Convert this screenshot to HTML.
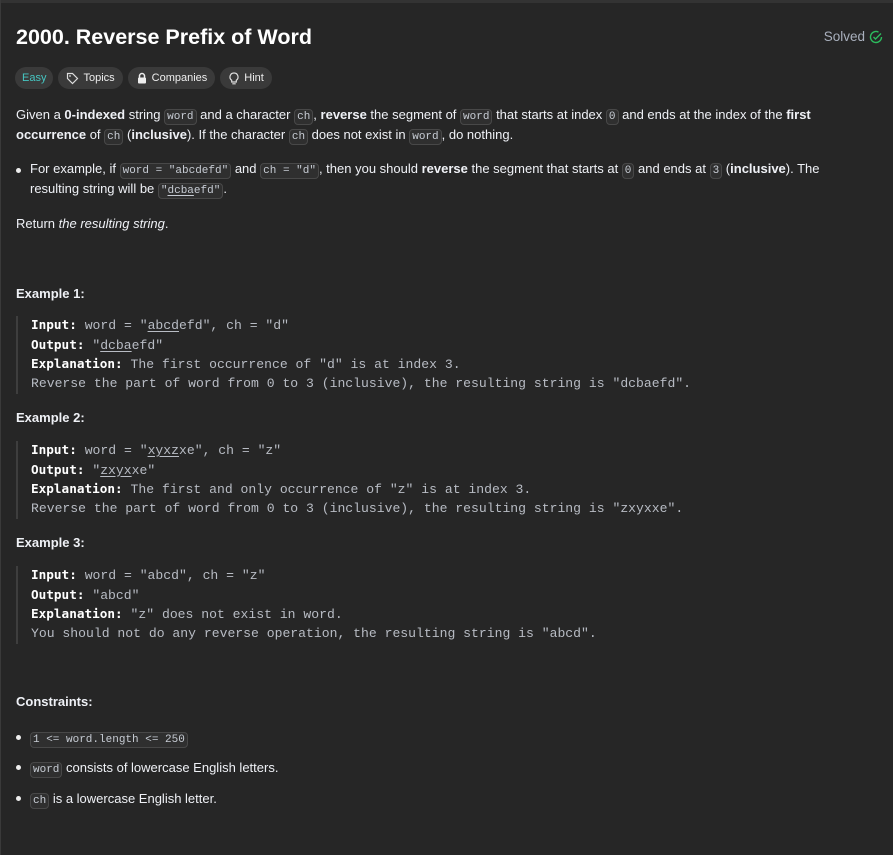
<!DOCTYPE html>
<html><head><meta charset="utf-8"><style>
body{margin:0;width:893px;height:855px;background:#262626;overflow:hidden;font-family:"Liberation Sans",sans-serif;color:#eff1f6;font-size:13px;position:relative}
.top{position:absolute;left:0;top:0;width:893px;height:3px;background:#333}
.lb{position:absolute;left:0;top:0;width:1px;height:855px;background:#3a3a3a}
.a{position:absolute;left:16px;white-space:nowrap}
h1{position:absolute;left:16px;top:25px;margin:0;font-size:21.5px;font-weight:600;color:#fff}
.solved{position:absolute;right:10px;top:29px;color:#a9b0bd;font-size:13.5px;display:flex;align-items:center;gap:4px}
.tags{position:absolute;left:15px;top:67px;display:flex;gap:5px}
.tag{height:22px;border-radius:11px;background:#3a3a3a;font-size:11px;display:flex;align-items:center;padding:0 8px;gap:4px;color:#eee}
code{font-family:"Liberation Mono",monospace;font-size:11px;background:#2f2f2f;border:1px solid #484848;border-radius:4px;padding:1px 2px;color:#c7ccd4}
b{font-weight:700}
.bul{position:absolute;left:30px;white-space:nowrap}
.dot{position:absolute;left:16px;width:5px;height:5px;border-radius:50%;background:#eee}
.blk{position:absolute;left:16px;border-left:2px solid #3e3e3e;padding-left:13px;font-family:"Liberation Mono",monospace;font-size:13.1px;line-height:18.7px;color:#b8bcc4;white-space:pre}
.blk b{color:#fff;font-family:"DejaVu Sans Mono",monospace;font-size:12.7px}
u{text-underline-offset:2px}
</style></head><body>
<div class="top"></div><div class="lb"></div>
<h1>2000. Reverse Prefix of Word</h1>
<div class="solved">Solved <svg width="14" height="14" viewBox="0 0 14 14"><path d="M12.5 7A5.5 5.5 0 1 1 9.5 2.1" fill="none" stroke="#2cbb5d" stroke-width="1.4"/><path d="M4.5 7l2 2 5.5-5.5" fill="none" stroke="#2cbb5d" stroke-width="1.4"/></svg></div>
<div class="tags">
<div class="tag" style="color:#46c6c2;padding:0 7px">Easy</div>
<div class="tag"><svg width="13" height="13" viewBox="0 0 13 13"><path d="M1.5 1.5h5l5 5-5 5-5-5z" fill="none" stroke="#ddd" stroke-width="1.2"/><circle cx="4" cy="4" r="0.9" fill="#ddd"/></svg>Topics</div>
<div class="tag"><svg width="12" height="12" viewBox="0 0 12 12"><path d="M3.5 5.5V4a2.5 2.5 0 0 1 5 0v1.5" fill="none" stroke="#eee" stroke-width="1.5"/><rect x="2" y="5.5" width="8" height="6" rx="1" fill="#eee"/></svg>Companies</div>
<div class="tag"><svg width="12" height="13" viewBox="0 0 12 13"><path d="M6 1a4 4 0 0 0-2.3 7.3V10h4.6V8.3A4 4 0 0 0 6 1zM4.3 11.8h3.4" fill="none" stroke="#ddd" stroke-width="1.2"/></svg>Hint</div>
</div>
<div class="a" style="top:107px">Given a <b>0-indexed</b> string <code>word</code> and a character <code>ch</code>, <b>reverse</b> the segment of <code>word</code> that starts at index <code>0</code> and ends at the index of the <b>first</b></div>
<div class="a" style="top:127px"><b>occurrence</b> of <code>ch</code> (<b>inclusive</b>). If the character <code>ch</code> does not exist in <code>word</code>, do nothing.</div>
<div class="dot" style="top:168px"></div>
<div class="bul" style="top:161px">For example, if <code>word = "abcdefd"</code> and <code>ch = "d"</code>, then you should <b>reverse</b> the segment that starts at <code>0</code> and ends at <code>3</code> (<b>inclusive</b>). The</div>
<div class="bul" style="top:181px">resulting string will be <code>"<u>dcba</u>efd"</code>.</div>
<div class="a" style="top:216px">Return <i>the resulting string</i>.</div>
<div class="a" style="top:286px"><b>Example 1:</b></div>
<div class="blk" style="top:316px"><b>Input:</b> word = "<u>abcd</u>efd", ch = "d"
<b>Output:</b> "<u>dcba</u>efd"
<b>Explanation:</b> The first occurrence of "d" is at index 3.
Reverse the part of word from 0 to 3 (inclusive), the resulting string is "dcbaefd".</div>
<div class="a" style="top:410px"><b>Example 2:</b></div>
<div class="blk" style="top:441px"><b>Input:</b> word = "<u>xyxz</u>xe", ch = "z"
<b>Output:</b> "<u>zxyx</u>xe"
<b>Explanation:</b> The first and only occurrence of "z" is at index 3.
Reverse the part of word from 0 to 3 (inclusive), the resulting string is "zxyxxe".</div>
<div class="a" style="top:535px"><b>Example 3:</b></div>
<div class="blk" style="top:566px"><b>Input:</b> word = "abcd", ch = "z"
<b>Output:</b> "abcd"
<b>Explanation:</b> "z" does not exist in word.
You should not do any reverse operation, the resulting string is "abcd".</div>
<div class="a" style="top:694px"><b>Constraints:</b></div>
<div class="dot" style="top:735px"></div>
<div class="bul" style="top:730px"><code>1 &lt;= word.length &lt;= 250</code></div>
<div class="dot" style="top:765px"></div>
<div class="bul" style="top:760px"><code>word</code> consists of lowercase English letters.</div>
<div class="dot" style="top:796px"></div>
<div class="bul" style="top:791px"><code>ch</code> is a lowercase English letter.</div>
</body></html>
